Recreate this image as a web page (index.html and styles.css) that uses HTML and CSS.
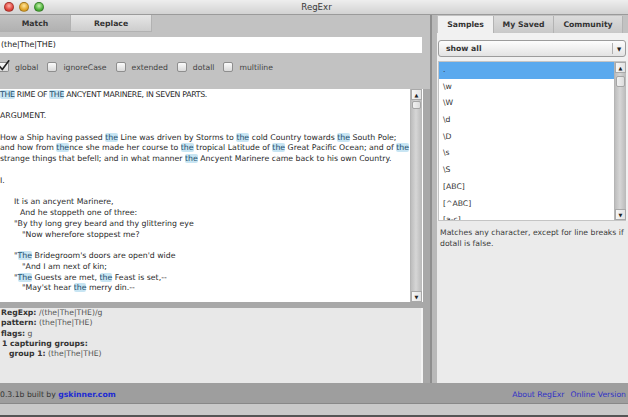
FILE: index.html
```html
<!DOCTYPE html>
<html>
<head>
<meta charset="utf-8">
<title>RegExr</title>
<link rel="stylesheet" href="styles.css">
</head>
<body>
<div class="window">
  <header class="titlebar">
    <div class="lights">
      <span class="light red"></span>
      <span class="light yellow"></span>
      <span class="light green"></span>
    </div>
    <div class="title">RegExr</div>
  </header>

  <div class="main">
    <section class="left">
      <nav class="ltabs">
        <div class="ltab active">Match</div>
        <div class="ltab">Replace</div>
      </nav>
      <div class="regex-input">(the|The|THE)</div>
      <div class="options">
        <label class="opt"><span class="cb checked"><svg width="12" height="12" viewBox="0 0 12 12"><path d="M1.5 6.2 L4.3 9.6 L10.8 0.8" fill="none" stroke="#222" stroke-width="1.6" stroke-linecap="round" stroke-linejoin="round"/></svg></span><span>global</span></label>
        <label class="opt"><span class="cb"></span><span>ignoreCase</span></label>
        <label class="opt"><span class="cb"></span><span>extended</span></label>
        <label class="opt"><span class="cb"></span><span>dotall</span></label>
        <label class="opt"><span class="cb"></span><span>multiline</span></label>
      </div>

      <div class="work">
        <div class="text-area">
          <div class="text-content">
            <div class="line caps"><span class="m">THE</span> RIME OF <span class="m">THE</span> ANCYENT MARINERE, IN SEVEN PARTS.</div>
            <div class="line blank"></div>
            <div class="line">ARGUMENT.</div>
            <div class="line blank"></div>
            <div class="line">How a Ship having passed <span class="m">the</span> Line was driven by Storms to <span class="m">the</span> cold Country towards <span class="m">the</span> South Pole;</div>
            <div class="line">and how from <span class="m">the</span>nce she made her course to <span class="m">the</span> tropical Latitude of <span class="m">the</span> Great Pacific Ocean; and of <span class="m">the</span></div>
            <div class="line">strange things that befell; and in what manner <span class="m">the</span> Ancyent Marinere came back to his own Country.</div>
            <div class="line blank"></div>
            <div class="line">I.</div>
            <div class="line blank"></div>
            <div class="line in1">It is an ancyent Marinere,</div>
            <div class="line in2">And he stoppeth one of three:</div>
            <div class="line in1">"By thy long grey beard and thy glittering eye</div>
            <div class="line in3">"Now wherefore stoppest me?</div>
            <div class="line blank"></div>
            <div class="line in1">"<span class="m">The</span> Bridegroom's doors are open'd wide</div>
            <div class="line in3">"And I am next of kin;</div>
            <div class="line in1">"<span class="m">The</span> Guests are met, <span class="m">the</span> Feast is set,--</div>
            <div class="line in3">"May'st hear <span class="m">the</span> merry din.--</div>
          </div>
          <div class="scrollbar">
            <div class="sb-btn">&#9650;</div>
            <div class="sb-track"><div class="sb-thumb"></div></div>
            <div class="sb-btn">&#9660;</div>
          </div>
        </div>
        <div class="details">
          <div><b>RegExp:</b> /(the|The|THE)/g</div>
          <div><b>pattern:</b> (the|The|THE)</div>
          <div><b>flags:</b> g</div>
          <div class="groups"><b>1 capturing groups:</b></div>
          <div class="group"><b>group 1:</b> (the|The|THE)</div>
        </div>
      </div>
    </section>

    <div class="divider"></div>

    <section class="right">
      <nav class="rtabs">
        <div class="rtab active samples">Samples</div>
        <div class="rtab saved">My Saved</div>
        <div class="rtab community">Community</div>
      </nav>
      <div class="rpanel">
        <div class="dropdown">
          <span class="dd-label">show all</span>
          <span class="dd-arrow">&#9660;</span>
        </div>
        <div class="list">
          <div class="items">
            <div class="item selected">.</div>
            <div class="item">\w</div>
            <div class="item">\W</div>
            <div class="item">\d</div>
            <div class="item">\D</div>
            <div class="item">\s</div>
            <div class="item">\S</div>
            <div class="item">[ABC]</div>
            <div class="item">[^ABC]</div>
            <div class="item">[a-c]</div>
          </div>
          <div class="scrollbar list-sb">
            <div class="sb-btn">&#9650;</div>
            <div class="sb-track"><div class="sb-thumb"></div></div>
            <div class="sb-btn">&#9660;</div>
          </div>
        </div>
      </div>
      <div class="description">Matches any character, except for line breaks if dotall is false.</div>
    </section>
  </div>

  <footer class="footer">
    <div class="credit">0.3.1b built by <a class="link strong">gskinner.com</a></div>
    <div class="links"><a class="link">About RegExr</a><a class="link">Online Version</a></div>
  </footer>
  <div class="strip"></div>
</div>
</body>
</html>
```
FILE: styles.css
```css
* { box-sizing: border-box; }

html, body {
  margin: 0;
  padding: 0;
}

body {
  width: 628px;
  height: 417px;
  overflow: hidden;
  font-family: "DejaVu Sans", Verdana, sans-serif;
  font-size: 7.7px;
  color: #333;
  background: #c2c2c2;
}

.window {
  width: 628px;
  height: 417px;
  display: flex;
  flex-direction: column;
}

/* Title bar */
.titlebar {
  height: 15px;
  flex: none;
  display: flex;
  align-items: center;
  background: linear-gradient(#eeeeee, #d2d2d2);
  border-bottom: 1px solid #9a9a9a;
}
.lights {
  display: flex;
  gap: 5px;
  padding-left: 4px;
}
.light {
  width: 10px;
  height: 10px;
  border-radius: 50%;
  border: 1px solid rgba(0,0,0,0.25);
}
.light.red { background: radial-gradient(circle at 50% 35%, #ffb0a8, #e0463d 60%, #b22a22); }
.light.yellow { background: radial-gradient(circle at 50% 35%, #ffe7a0, #e2a62a 60%, #b5801a); }
.light.green { background: radial-gradient(circle at 50% 35%, #c9f3b0, #4fb23c 60%, #2f8322); }
.title {
  flex: 1;
  text-align: center;
  font-size: 8.6px;
  color: #3a3a3a;
  margin-left: -39px;
}

/* Main */
.main {
  flex: 1;
  display: flex;
  min-height: 0;
}

.left {
  width: 430px;
  flex: none;
  display: flex;
  flex-direction: column;
}

.ltabs {
  height: 17px;
  flex: none;
  display: flex;
}
.ltab {
  display: flex;
  align-items: center;
  justify-content: center;
  font-weight: bold;
  color: #333;
}
.ltab.active {
  width: 70px;
  background: linear-gradient(#c2c2c2, #b0b0b0);
}
.ltab:not(.active) {
  width: 82px;
  background: linear-gradient(#e6e6e6, #cdcdcd);
  border: 1px solid #b2b2b2;
  border-top: none;
}

.regex-input {
  margin-top: 5px;
  width: 422px;
  height: 16px;
  line-height: 16px;
  padding-left: 1px;
  background: #fff;
  color: #222;
  font-size: 7.9px;
}

.options {
  margin-top: 9px;
  height: 10px;
  display: flex;
  align-items: center;
  gap: 9px;
  color: #444;
}
.opt {
  display: flex;
  align-items: center;
  gap: 6px;
}
.cb {
  width: 10px;
  height: 10px;
  border: 1px solid #8e8e8e;
  border-radius: 2px;
  background: linear-gradient(#fbfbfb, #d9d9d9);
  position: relative;
}
.cb.checked {
  width: 9px;
  border-left: none;
  border-radius: 0 2px 2px 0;
}
.cb svg {
  position: absolute;
  left: -2px;
  top: -3px;
}

.work {
  margin-top: 17px;
  flex: 1;
  min-height: 0;
  display: flex;
  flex-direction: column;
  gap: 6px;
  background: #a8a8a8;
  padding-right: 7px;
}

.text-area {
  flex: 1;
  min-height: 0;
  display: flex;
  background: #fff;
}
.text-content {
  flex: 1;
  overflow: hidden;
  padding-top: 0.6px;
  font-size: 7.8px;
  line-height: 10.78px;
  color: #2a2a2a;
  white-space: nowrap;
}
.line { height: 10.78px; }
.caps { letter-spacing: -0.3px; }
.in1 { padding-left: 14px; }
.in2 { padding-left: 20px; }
.in3 { padding-left: 22px; }

.m {
  background: #c8e5f3;
  color: #1d4d6b;
  border-radius: 2px;
}

.scrollbar {
  width: 12px;
  flex: none;
  display: flex;
  flex-direction: column;
  border-left: 1px solid #b5b5b5;
  background: linear-gradient(to right, #bdbdbd, #d6d6d6 45%, #b9b9b9);
}
.text-area .scrollbar { margin-right: 1px; }
.sb-btn {
  height: 11px;
  flex: none;
  display: flex;
  align-items: center;
  justify-content: center;
  font-size: 5px;
  color: #222;
  background: linear-gradient(to right, #f6f6f6, #e2e2e2);
  border: 1px solid #a9a9a9;
}
.sb-track {
  flex: 1;
  padding: 1px 1px 0;
}
.sb-thumb {
  height: 8px;
  border: 1px solid #a5a5a5;
  border-radius: 2px;
  background: linear-gradient(to right, #f2f2f2, #dcdcdc);
}

.details {
  height: 75px;
  flex: none;
  background: #e8e8e8;
  border-right: 2px solid #f4f4f4;
  padding: 0 0 0 1px;
  line-height: 10.3px;
  color: #555;
}
.details b { color: #333; }
.details .groups { padding-left: 1px; }
.details .group { padding-left: 8px; }

/* Divider */
.divider {
  width: 7px;
  flex: none;
  border-left: 2px solid #8e8e8e;
  background: #b9b9b9;
}

/* Right panel */
.right {
  flex: 1;
  display: flex;
  flex-direction: column;
  min-width: 0;
}
.rtabs {
  height: 18px;
  flex: none;
  display: flex;
  padding: 1px 0 0 1px;
}
.rtab {
  display: flex;
  align-items: center;
  justify-content: center;
  font-weight: bold;
  color: #333;
}
.rtab.samples { width: 55px; background: #f1f1f1; }
.rtab.saved {
  width: 60px;
  background: linear-gradient(#dcdcdc, #c8c8c8);
  border-left: 1px solid #b3b3b3;
}
.rtab.community {
  width: 70px;
  background: linear-gradient(#dcdcdc, #c8c8c8);
  border-left: 1px solid #b3b3b3;
  border-right: 1px solid #b3b3b3;
}

.rpanel {
  background: #f1f1f1;
  padding: 7px 2px 0 1px;
  flex: none;
}
.dropdown {
  height: 17px;
  display: flex;
  align-items: center;
  border: 1px solid #9c9c9c;
  border-radius: 3px;
  background: linear-gradient(#fdfdfd, #e3e3e3);
}
.dd-label {
  flex: 1;
  padding-left: 7px;
  font-weight: bold;
  color: #333;
}
.dd-arrow {
  width: 13px;
  height: 11px;
  border-left: 1px solid #b0b0b0;
  display: flex;
  align-items: center;
  justify-content: center;
  font-size: 5.5px;
  color: #222;
}

.list {
  margin-top: 4px;
  height: 160px;
  display: flex;
  background: #fff;
  border: 1px solid #c4c4c4;
  border-right: none;
}
.items {
  flex: 1;
  overflow: hidden;
  color: #333;
}
.item {
  height: 16.7px;
  line-height: 16.7px;
  padding-left: 4px;
}
.item.selected { background: #5aa9ee; }
.list-sb .sb-thumb { height: 11px; margin-top: 2px; }

.description {
  flex: 1;
  background: #ebebeb;
  padding: 5.5px 3px 0 3px;
  line-height: 11px;
  color: #3a3a3a;
}

/* Footer */
.footer {
  height: 20px;
  flex: none;
  display: flex;
  align-items: center;
  justify-content: space-between;
  background: #9e9e9e;
  padding-right: 2px;
  padding-top: 2px;
  color: #333;
}
.links {
  display: flex;
  gap: 6px;
}
.link { color: #3131c6; }
.link.strong { color: #1d2bd3; font-weight: bold; }

.strip {
  height: 14px;
  flex: none;
  background: #c9c9c9;
  border-top: 1px solid #888;
  border-bottom: 2px solid #555;
}
```
